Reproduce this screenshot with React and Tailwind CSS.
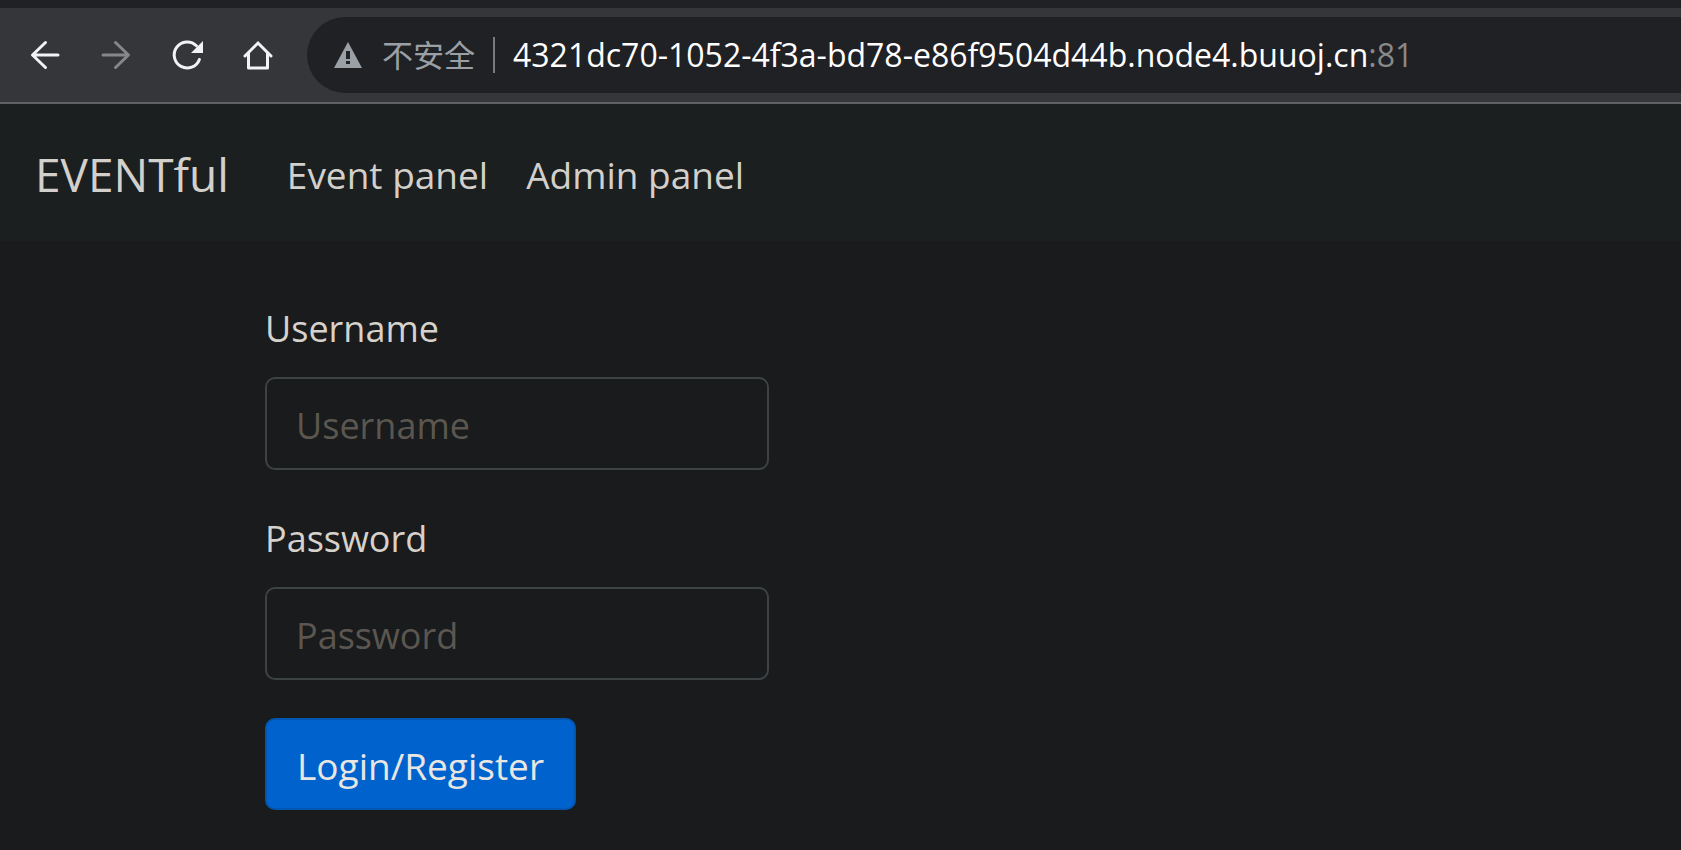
const UI = "font-['Open_Sans','Noto_Sans_CJK_SC',sans-serif]";

function BackIcon({ className }) {
  return (
    <svg viewBox="0 0 30 30" className={className} fill="none" stroke="currentColor" strokeWidth="3" strokeLinecap="round" strokeLinejoin="round" aria-hidden="true">
      <path d="M28 15H3M15.500 2.500L2.500 15L15.500 27.500" />
    </svg>
  );
}

function ReloadIcon() {
  return (
    <svg viewBox="0 0 30 30" className="size-[30px] overflow-visible" aria-hidden="true">
      <path d="M27.400 19.500A13 13 0 1 1 24.400 5.800" fill="none" stroke="currentColor" strokeWidth="3" strokeLinecap="round" />
      <path d="M31 1V13H19Z" fill="currentColor" />
    </svg>
  );
}

function HomeIcon() {
  return (
    <svg viewBox="0 0 30 30" className="size-[30px]" fill="none" stroke="currentColor" strokeWidth="3" strokeLinecap="round" strokeLinejoin="miter" aria-hidden="true">
      <path d="M2 16L15 3L28 16" />
      <path d="M5.500 13.500V28H24.500V13.500" strokeLinejoin="round" />
    </svg>
  );
}

function WarningIcon() {
  return (
    <svg viewBox="0 0 28 26" className="h-[26px] w-7 text-[#9aa0a6]" aria-hidden="true">
      <path d="M14 0L28 26H0Z" fill="currentColor" />
      <path d="M12 9h4v8h-4zM12 19h4v3h-4z" fill="#202124" />
    </svg>
  );
}

function Field({ id, label, type }) {
  return (
    <div className="mb-[38px] flex flex-col gap-[18px] text-[36px]">
      <label htmlFor={id} className="leading-[61px] text-[#d6d2cb]">{label}</label>
      <input
        id={id}
        type={type}
        placeholder={label}
        className="h-[93px] w-full rounded-[10px] border-2 border-[#3d4345] bg-[#191b1c] px-[29px] pt-1 text-[#d6d2cb] placeholder:text-[#5b5750]"
      />
    </div>
  );
}

export default function App() {
  return (
    <div className={`flex min-h-screen flex-col bg-[#191b1c] text-[37px] ${UI}`}>
      <div className="h-2 bg-[#202124]" />
      <div className="flex items-center border-b-2 border-[#606163] bg-[#35363a] py-[9px] pl-[30px] text-[#f1f3f4]">
        <div className="flex shrink-0 items-center gap-[41px]">
          <button type="button" aria-label="Back"><BackIcon className="size-[30px]" /></button>
          <button type="button" aria-label="Forward" disabled className="text-[#86878a]"><BackIcon className="size-[30px] rotate-180" /></button>
          <button type="button" aria-label="Reload"><ReloadIcon /></button>
          <button type="button" aria-label="Home"><HomeIcon /></button>
        </div>
        <div className="ml-[34px] flex h-[76px] flex-1 items-center rounded-l-full bg-[#202124] pl-[27px] text-[32px] whitespace-nowrap">
          <WarningIcon />
          <span className="ml-5 text-[31px] text-[#9aa0a6]">不安全</span>
          <span className="mx-[18px] h-9 w-[2px] bg-[#77797c]" />
          <span className="text-white">4321dc70-1052-4f3a-bd78-e86f9504d44b.node4.buuoj.cn</span>
          <span className="text-[#88898b]">:81</span>
        </div>
      </div>
      <nav className="flex h-[137px] items-center bg-[#1b1f20] pt-1 pl-[35px] text-[#d3d0cc]">
        <a href="#" className="text-[46px]">EVENTful</a>
        <a href="#events" className="ml-[58px]">Event panel</a>
        <a href="#admin" className="ml-[38px]">Admin panel</a>
      </nav>
      <main className="pt-[57px] pl-[265px]">
        <form className="w-full max-w-[504px]" onSubmit={(e) => e.preventDefault()}>
          <Field id="username" label="Username" type="text" />
          <Field id="password" label="Password" type="password" />
          <button type="submit" className="h-[92px] rounded-[10px] border-2 border-[#0056b1] bg-[#0062cc] px-[30px] pt-1 text-[#e8e6e3]">
            Login/Register
          </button>
        </form>
      </main>
    </div>
  );
}
